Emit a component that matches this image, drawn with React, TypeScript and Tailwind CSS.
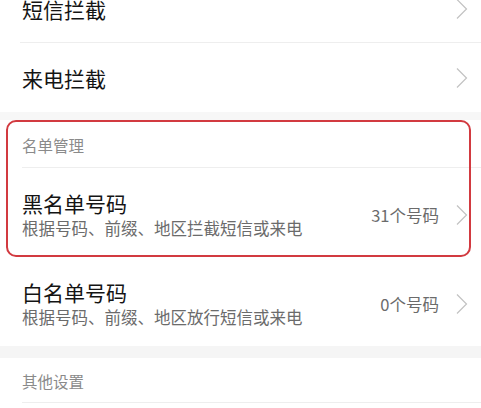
import React from 'react'

function Chevron() {
  return (
    <svg width="12" height="22" viewBox="0 0 12 22" className="shrink-0" fill="none">
      <polyline points="1,1.5 10.5,11 1,20.5" stroke="#c2c2c2" strokeWidth="1.2" />
    </svg>
  )
}

function SimpleRow({ title, height, divider }: { title: string; height: string; divider?: boolean }) {
  return (
    <div className={`relative flex items-center pl-[22px] pr-[13px] ${height}`}>
      <span className="flex-1 text-[21px] leading-[26px] text-[#141414]">{title}</span>
      <Chevron />
      {divider && <div className="absolute bottom-0 left-[20px] right-0 h-px bg-[#eeeeee]" />}
    </div>
  )
}

function ListRow({ title, desc, count, height }: { title: string; desc: string; count: string; height: string }) {
  return (
    <div className={`flex items-center pl-[22px] pr-[13px] ${height}`}>
      <div className="flex-1 flex flex-col">
        <span className="text-[21px] leading-[26px] text-[#141414]">{title}</span>
        <span className="text-[16.5px] leading-[24px] text-[#6b6b6b]">{desc}</span>
      </div>
      <span className="text-[16.5px] text-[#6b6b6b] mr-[17px]">{count}</span>
      <Chevron />
    </div>
  )
}

function SectionHeader({ label, height }: { label: string; height: string }) {
  return (
    <div className={`relative flex items-center pl-[22px] ${height}`}>
      <span className="text-[15.5px] text-[#8a8a8a] pt-[3px]">{label}</span>
      <div className="absolute bottom-0 left-[22px] right-0 h-px bg-[#eeeeee]" />
    </div>
  )
}

export default function App() {
  return (
    <div
      className="relative w-[481px] h-[408px] overflow-hidden bg-white"
      style={{ fontFamily: '"Noto Sans CJK SC", "Noto Sans", sans-serif' }}
    >
      <div className="-mt-[26px]">
        <SimpleRow title="短信拦截" height="h-[69px]" divider />
        <SimpleRow title="来电拦截" height="h-[69px]" />
        <div className="h-[8px] bg-[#f7f7f7]" />
        <SectionHeader label="名单管理" height="h-[48px]" />
        <ListRow title="黑名单号码" desc="根据号码、前缀、地区拦截短信或来电" count="31个号码" height="h-[94px]" />
        <ListRow title="白名单号码" desc="根据号码、前缀、地区放行短信或来电" count="0个号码" height="h-[84px]" />
        <div className="h-[12px] bg-[#f5f5f5]" />
        <SectionHeader label="其他设置" height="h-[45px]" />
      </div>
      <div className="absolute left-[6px] top-[120px] w-[465px] h-[137px] rounded-[10px] border-2 border-[#d23a40]" />
    </div>
  )
}
